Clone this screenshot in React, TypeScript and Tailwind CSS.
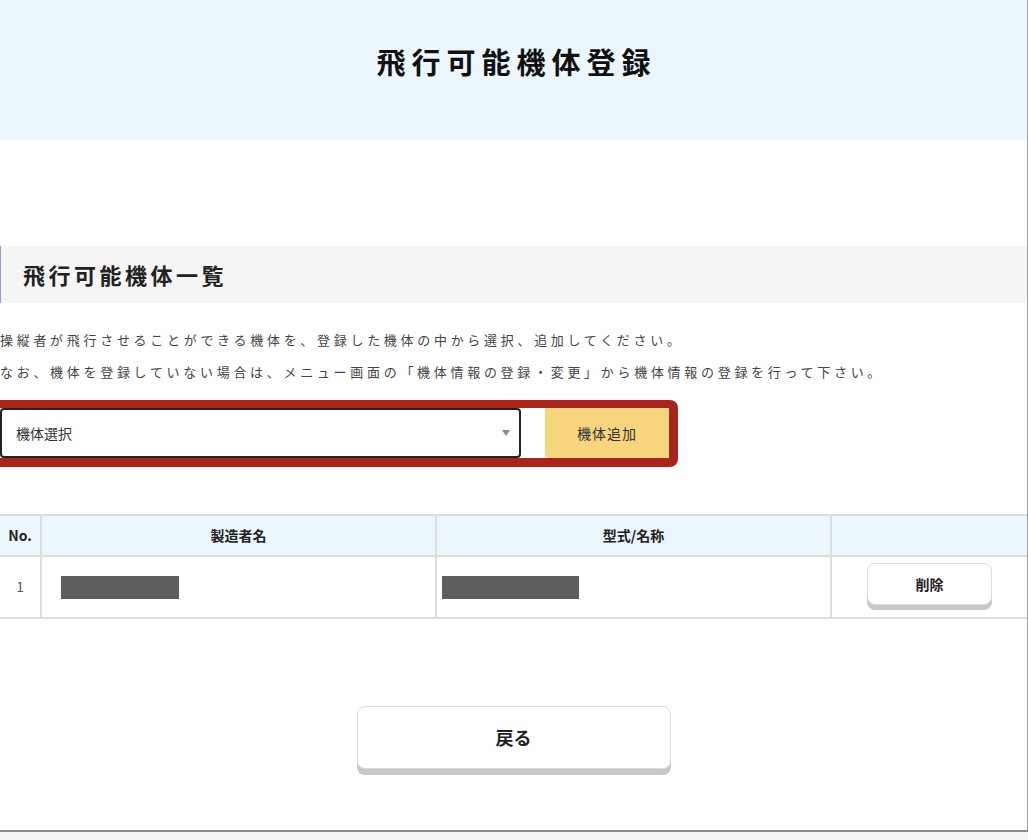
import React from "react";

const font = { fontFamily: '"Noto Sans CJK JP", "Noto Sans", sans-serif' };

export default function App() {
  return (
    <div className="min-h-[840px] bg-[#f4f4f4]" style={font}>
      <div className="w-[1028px] h-[832px] bg-white border-r border-r-[#a0a0a0] border-b-2 border-b-[#8a8a8a] flex flex-col">
        <div className="h-[140px] bg-[#ebf6fd] flex items-center justify-center pb-[17px]">
          <h1 className="text-[29px] font-bold tracking-[6px] text-[#111] pl-[6px]">飛行可能機体登録</h1>
        </div>

        <div className="mt-[106px] h-[57px] bg-[#f5f5f5] border-l border-l-[#8fa3c9] pl-[22px] flex items-center">
          <h2 className="text-[22px] font-bold text-[#222] tracking-[3.5px]">飛行可能機体一覧</h2>
        </div>

        <div className="mt-[21px] text-[13px] leading-[32px] text-[#444] tracking-[3.7px]">
          <p>操縦者が飛行させることができる機体を、登録した機体の中から選択、追加してください。</p>
          <p>なお、機体を登録していない場合は、メニュー画面の「機体情報の登録・変更」から機体情報の登録を行って下さい。</p>
        </div>

        <div className="mt-[12px] w-[678px] h-[67px] bg-[#a8241c] rounded-r-[8px] pt-[8px] pb-[9px] pr-[9px]">
          <div className="h-[50px] bg-white flex">
            <div className="w-[521px] h-full border-2 border-[#222] rounded-[4px] flex items-center justify-between pl-[14px] pr-[9px]">
              <span className="text-[14px] text-[#333]">機体選択</span>
              <svg width="8" height="6" viewBox="0 0 8 6"><path d="M0 0 L8 0 L4 6 Z" fill="#888" /></svg>
            </div>
            <div className="w-[24px]" />
            <button className="w-[124px] h-full bg-[#f7d47e] rounded-bl-[4px] text-[14px] text-[#333] tracking-[1px] flex items-center justify-center">
              機体追加
            </button>
          </div>
        </div>

        <table className="mt-[47px] w-full border-collapse table-fixed">
          <colgroup>
            <col className="w-[41px]" />
            <col className="w-[395px]" />
            <col className="w-[395px]" />
            <col />
          </colgroup>
          <thead>
            <tr className="h-[41px] bg-[#ebf6fd]">
              <th className="border-2 border-[#dedede] border-l-0 text-[14px] font-bold text-[#222]">No.</th>
              <th className="border-2 border-[#dedede] text-[14px] font-bold text-[#222]">製造者名</th>
              <th className="border-2 border-[#dedede] text-[14px] font-bold text-[#222]">型式/名称</th>
              <th className="border-2 border-[#dedede] border-r-0" />
            </tr>
          </thead>
          <tbody>
            <tr className="h-[62px]">
              <td className="border-2 border-[#dedede] border-l-0 text-center text-[13px] text-[#555]">1</td>
              <td className="border-2 border-[#dedede] pl-[19px]">
                <div className="w-[118px] h-[23px] bg-[#5e5e5e]" />
              </td>
              <td className="border-2 border-[#dedede] pl-[5px]">
                <div className="w-[137px] h-[23px] bg-[#5e5e5e]" />
              </td>
              <td className="border-2 border-[#dedede] border-r-0">
                <div className="flex justify-center pb-[6px]">
                  <button className="w-[125px] h-[42px] bg-white border border-[#dcdcdc] rounded-[8px] shadow-[0_5px_0_#c8c8c8] text-[14px] font-bold text-[#222]">
                    削除
                  </button>
                </div>
              </td>
            </tr>
          </tbody>
        </table>

        <div className="mt-[87px] flex justify-center">
          <button className="w-[314px] h-[63px] bg-white border border-[#dcdcdc] rounded-[8px] shadow-[0_6px_0_#c8c8c8] text-[18px] font-bold text-[#222]">
            戻る
          </button>
        </div>
      </div>
    </div>
  );
}
